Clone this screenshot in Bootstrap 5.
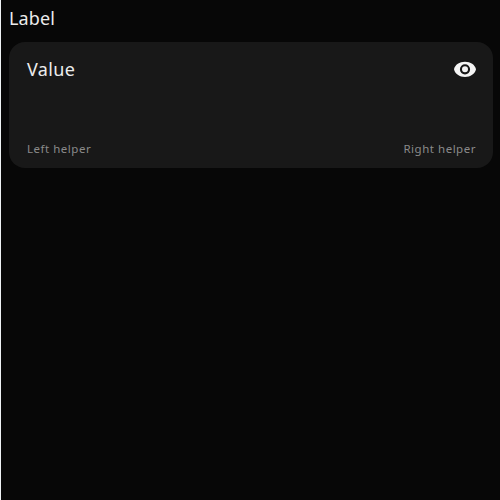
<!DOCTYPE html>
<html lang="en" data-bs-theme="dark">
<head>
<meta charset="utf-8">
<meta name="viewport" content="width=device-width, initial-scale=1">
<title>Text area</title>
<link href="https://cdn.jsdelivr.net/npm/bootstrap@5.3.0/dist/css/bootstrap.min.css" rel="stylesheet">
<style>
body { background: #070707; color: #ececec; font-family: "Noto Sans", sans-serif; border-left: 1px solid #eef2f4; padding: 6px 7px 0 8px; overflow: hidden; }
.field-label { font-size: 18px; line-height: 24px; letter-spacing: .1px; margin-bottom: 12px; }
.field-box { height: 126px; background: #181818; border-radius: 16px; padding: 15px 17px 11px 18px; }
.field-value { font-size: 18px; line-height: 24px; letter-spacing: .35px; }
.field-helper { font-size: 11.5px; line-height: 16px; letter-spacing: .52px; color: #8a8a8a; }
.eye { margin-right: -1px; }
</style>
</head>
<body class="vh-100">
<div class="field-label">Label</div>
<div class="field-box d-flex flex-column justify-content-between">
  <div class="d-flex justify-content-between align-items-start">
    <span class="field-value">Value</span>
    <svg class="eye d-block" width="24" height="24" viewBox="0 0 24 24" fill="#f5f5f5" aria-label="Show"><path fill-rule="evenodd" d="M12 4.800C6.500 4.800 2 7.700 1 12.300 2 17 6.500 20 12 20s10-3 11-7.700C22 7.700 17.500 4.800 12 4.800zM12 17.400a5.100 5.100 0 1 1 0-10.200 5.100 5.100 0 0 1 0 10.200zm0-8.100a3 3 0 1 0 0 6 3 3 0 0 0 0-6z"/></svg>
  </div>
  <div class="d-flex justify-content-between field-helper">
    <span>Left helper</span><span>Right helper</span>
  </div>
</div>
<script src="https://cdn.jsdelivr.net/npm/bootstrap@5.3.0/dist/js/bootstrap.bundle.min.js"></script>
</body>
</html>
